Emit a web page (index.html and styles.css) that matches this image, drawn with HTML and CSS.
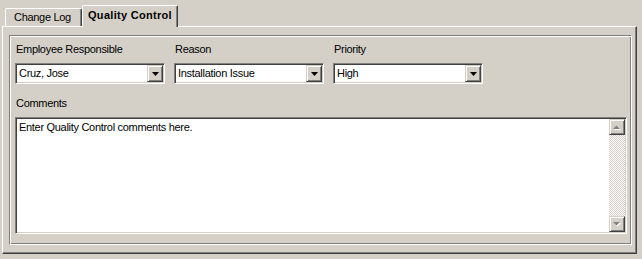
FILE: index.html
```html
<!DOCTYPE html>
<html lang="en">
  <head>
    <meta charset="UTF-8" />
    <title>Quality Control</title>
    <link rel="stylesheet" href="styles.css">
  </head>
  <body>
    <div class="tabs">
      <div class="tab">Change Log</div>
      <div class="tab active">Quality Control</div>
    </div>
    <div class="panel">
      <div class="group">
        <div class="fields">
          <div class="field">
            <label>Employee Responsible</label>
            <div class="combo">
              <span class="combo-value">Cruz, Jose</span>
              <span class="btn3d"><svg width="7" height="4" viewBox="0 0 7 4"><polygon points="0,0 7,0 3.5,4" fill="#000"/></svg></span>
            </div>
          </div>
          <div class="field">
            <label>Reason</label>
            <div class="combo">
              <span class="combo-value">Installation Issue</span>
              <span class="btn3d"><svg width="7" height="4" viewBox="0 0 7 4"><polygon points="0,0 7,0 3.5,4" fill="#000"/></svg></span>
            </div>
          </div>
          <div class="field">
            <label>Priority</label>
            <div class="combo">
              <span class="combo-value">High</span>
              <span class="btn3d"><svg width="7" height="4" viewBox="0 0 7 4"><polygon points="0,0 7,0 3.5,4" fill="#000"/></svg></span>
            </div>
          </div>
        </div>
        <label class="comments-label">Comments</label>
        <div class="memo">
          <div class="memo-text">Enter Quality Control comments here.</div>
          <div class="vscroll">
            <span class="btn3d sb-btn"><svg width="8" height="5" viewBox="0 0 8 5"><polygon points="1,5 8,5 4.5,1.5" fill="#fff"/><polygon points="0,4 7,4 3.5,0.5" fill="#808080"/></svg></span>
            <span class="btn3d sb-btn"><svg width="8" height="5" viewBox="0 0 8 5"><polygon points="1,1 8,1 4.5,4.5" fill="#fff"/><polygon points="0,0 7,0 3.5,3.5" fill="#808080"/></svg></span>
          </div>
        </div>
      </div>
    </div>
  </body>
</html>
```

FILE: styles.css
```css
* {
  box-sizing: border-box;
}
body {
  margin: 0;
  padding: 0 5px 0 2px;
  background: #d4d0c8;
  font-family: "Liberation Sans", Arial, sans-serif;
  font-size: 11px;
  line-height: 13px;
  letter-spacing: -0.3px;
  color: #000;
}
.tabs {
  display: flex;
  align-items: flex-end;
  height: 26px;
  padding-left: 3px;
}
.tab {
  width: 77px;
  height: 18px;
  padding: 2px 0 0 8px;
  border: 1px solid #fff;
  border-bottom: 0;
  border-right-color: #404040;
  border-radius: 2px 2px 0 0;
  box-shadow: inset -1px 0 #808080;
  white-space: nowrap;
}
.tab.active {
  position: relative;
  z-index: 1;
  width: 96px;
  height: 22px;
  margin-bottom: -1px;
  padding: 3px 0 0 5px;
  background: #d4d0c8;
  font-weight: bold;
  letter-spacing: 0.3px;
}
.panel {
  height: 228px;
  padding: 8px 0 0 6px;
  border: 1px solid #fff;
  border-right-color: #404040;
  border-bottom-color: #404040;
  box-shadow: inset -1px -1px #808080;
}
.group {
  width: 623px;
  height: 210px;
  padding: 7px 4px 0 5px;
  border: 1px solid #808080;
  border-right-color: #fff;
  border-bottom-color: #fff;
  box-shadow: inset 1px 1px #fff, inset -1px -1px #808080;
}
.fields {
  display: flex;
  gap: 9px;
}
.field label,
.comments-label {
  display: block;
  padding-left: 1px;
  margin-bottom: 7px;
}
.comments-label {
  margin-top: 13px;
}
.combo,
.memo {
  display: flex;
  padding: 1px;
  background: #fff;
  border: 1px solid;
  border-color: #808080 #fff #fff #808080;
  box-shadow: inset 1px 1px #404040, inset -1px -1px #d4d0c8;
}
.combo {
  width: 150px;
  height: 21px;
}
.combo-value {
  flex: 1;
  padding-left: 2px;
  line-height: 17px;
  white-space: nowrap;
  overflow: hidden;
}
.btn3d {
  display: flex;
  align-items: center;
  justify-content: center;
  width: 16px;
  height: 17px;
  background: #d4d0c8;
  border: 1px solid;
  border-color: #d4d0c8 #404040 #404040 #d4d0c8;
  box-shadow: inset 1px 1px #fff, inset -1px -1px #808080;
}
.btn3d svg {
  display: block;
}
.memo {
  width: 612px;
  height: 117px;
}
.memo-text {
  flex: 1;
  padding: 2px 2px 0;
}
.vscroll {
  display: flex;
  flex-direction: column;
  justify-content: space-between;
  width: 16px;
  background-image: conic-gradient(#fff 25%, #d4d0c8 0 50%, #fff 0 75%, #d4d0c8 0);
  background-size: 2px 2px;
}
.sb-btn {
  height: 16px;
}
```
